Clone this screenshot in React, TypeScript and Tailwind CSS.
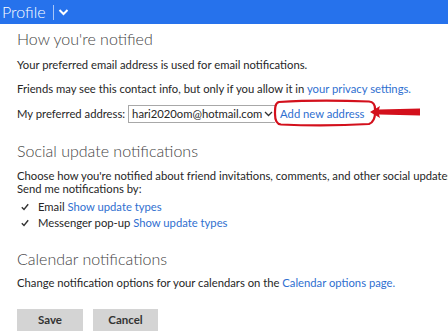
import React from "react";

const font = { fontFamily: "Lato, 'Open Sans', sans-serif" };

function Check() {
  return (
    <svg width="8" height="8" viewBox="0 0 8 8" className="shrink-0">
      <path d="M0.8 4.2 L3 6.5 L7.2 1.2" fill="none" stroke="#333" strokeWidth="1.4" />
    </svg>
  );
}

function Row({ className, children }: { className: string; children: React.ReactNode }) {
  return <div className={`flex items-center ${className}`}>{children}</div>;
}

export default function App() {
  return (
    <div className="w-[448px] h-[336px] overflow-hidden bg-white text-[#262626]" style={font}>
      {/* top bar */}
      <div className="h-6 bg-[#2672ec] flex items-center text-white">
        <span className="w-[53px] pl-[2px] text-[16px] font-light leading-none">Profile</span>
        <span className="w-px h-[15px] bg-white/60" />
        <svg width="11" height="8" viewBox="0 0 11 8" className="ml-[4px]">
          <path d="M1.5 2 L5.5 6 L9.5 2" fill="none" stroke="white" strokeWidth="2" />
        </svg>
      </div>

      <div className="pl-[17px] text-[11.25px] leading-none whitespace-nowrap">
        <Row className="mt-[5px] h-[20px]">
          <h2 className="text-[16px] font-light text-[#444]">How you're notified</h2>
        </Row>
        <Row className="mt-[8px] h-[16px]">
          <p>Your preferred email address is used for email notifications.</p>
        </Row>
        <Row className="mt-[8px] h-[16px]">
          <p>
            Friends may see this contact info, but only if you allow it in{" "}
            <span className="text-[#2f6fd0]">your privacy settings.</span>
          </p>
        </Row>
        <Row className="mt-[6px] h-[22px]">
          <span>My preferred address:</span>
          <div className="ml-[3px] w-[147px] h-[18px] border-y border-l border-[#a8a8a8] flex items-center justify-between pl-[3px] pr-[2px]">
            <span>hari2020om@hotmail.com</span>
            <svg width="9" height="6" viewBox="0 0 9 6">
              <path d="M1 1 L4.5 4.5 L8 1" fill="none" stroke="#333" strokeWidth="1.3" />
            </svg>
          </div>
          <span className="relative ml-[5px] text-[#2f6fd0]">
            Add new address
            {/* hand-drawn red ring */}
            <svg
              width="105"
              height="28"
              viewBox="0 0 105 28"
              className="absolute left-[-7px] top-[-9px] pointer-events-none"
            >
              <path
                d="M6 3 C30 1.5 70 1.5 96 2.5 C101 3 102 6 102 10 C102.5 17 101.5 23 96 25 C70 26.5 30 26.5 8 25.5 C3 25 2 21 2 15 C2 9 2 4 6 3 Z"
                fill="none"
                stroke="#d3101c"
                strokeWidth="2.2"
              />
            </svg>
            {/* red arrow */}
            <svg
              width="52"
              height="14"
              viewBox="0 0 52 14"
              className="absolute left-[89px] top-[-3px] pointer-events-none"
            >
              <path
                d="M1 7 L11 1 L10 4.5 L51 3.5 L51 10.5 L10 9.5 L11 13 Z"
                fill="#d3101c"
              />
            </svg>
          </span>
        </Row>

        <Row className="mt-[16px] h-[20px]">
          <h2 className="text-[16px] font-light text-[#444]">Social update notifications</h2>
        </Row>
        <Row className="mt-[8px] h-[13px]">
          <p>Choose how you're notified about friend invitations, comments, and other social updates.</p>
        </Row>
        <Row className="h-[13px]">
          <p>Send me notifications by:</p>
        </Row>
        <Row className="mt-[4px] h-[16px] gap-[9px] pl-[4px]">
          <Check />
          <span>
            Email <span className="text-[#2f6fd0]">Show update types</span>
          </span>
        </Row>
        <Row className="h-[16px] gap-[9px] pl-[4px]">
          <Check />
          <span>
            Messenger pop-up <span className="text-[#2f6fd0]">Show update types</span>
          </span>
        </Row>

        <Row className="mt-[18px] h-[20px]">
          <h2 className="text-[16px] font-light text-[#444]">Calendar notifications</h2>
        </Row>
        <Row className="mt-[6px] h-[16px]">
          <p>
            Change notification options for your calendars on the{" "}
            <span className="text-[#2f6fd0]">Calendar options page.</span>
          </p>
        </Row>

        <div className="mt-[18px] flex gap-[10px]">
          <button className="w-[66px] h-[22px] bg-[#d4d4d4] font-bold text-[11.5px] text-[#333]">Save</button>
          <button className="w-[65px] h-[22px] bg-[#d4d4d4] font-bold text-[11.5px] text-[#333]">Cancel</button>
        </div>
      </div>
    </div>
  );
}
